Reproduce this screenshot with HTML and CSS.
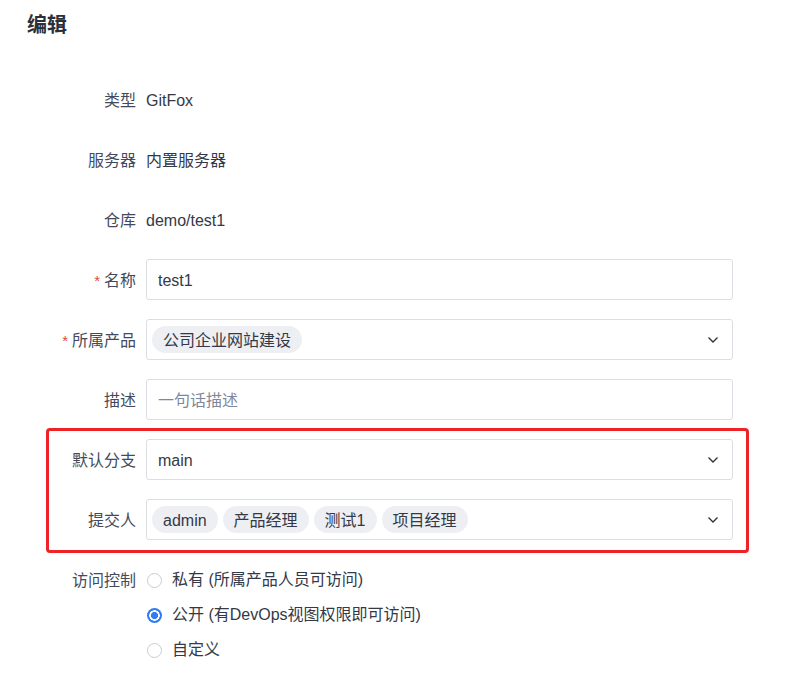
FILE: index.html
```html
<!DOCTYPE html>
<html lang="zh">
<head>
<meta charset="utf-8">
<title>编辑</title>
<link rel="stylesheet" href="styles.css">
</head>
<body>
<div class="page">
  <h1 class="title">编辑</h1>
  <div class="form">
    <div class="row"><div class="label">类型</div><div class="value">GitFox</div></div>
    <div class="row"><div class="label">服务器</div><div class="value">内置服务器</div></div>
    <div class="row"><div class="label">仓库</div><div class="value">demo/test1</div></div>
    <div class="row"><div class="label"><span class="req">*</span>名称</div><div class="control input"><span class="text">test1</span></div></div>
    <div class="row"><div class="label"><span class="req">*</span>所属产品</div>
      <div class="control select"><div class="tags"><span class="tag">公司企业网站建设</span></div>
        <svg class="chev" width="12" height="8" viewBox="0 0 12 8"><path d="M1.5 1.5 L6 6 L10.5 1.5" fill="none" stroke="#2b2f38" stroke-width="1.3"/></svg>
      </div>
    </div>
    <div class="row"><div class="label">描述</div><div class="control input"><span class="text placeholder">一句话描述</span></div></div>
    <div class="group">
      <div class="row"><div class="label">默认分支</div>
        <div class="control select"><span class="text">main</span>
          <svg class="chev" width="12" height="8" viewBox="0 0 12 8"><path d="M1.5 1.5 L6 6 L10.5 1.5" fill="none" stroke="#2b2f38" stroke-width="1.3"/></svg>
        </div>
      </div>
      <div class="row last"><div class="label">提交人</div>
        <div class="control select"><div class="tags"><span class="tag">admin</span><span class="tag">产品经理</span><span class="tag">测试1</span><span class="tag">项目经理</span></div>
          <svg class="chev" width="12" height="8" viewBox="0 0 12 8"><path d="M1.5 1.5 L6 6 L10.5 1.5" fill="none" stroke="#2b2f38" stroke-width="1.3"/></svg>
        </div>
      </div>
      <div class="highlight"></div>
    </div>
    <div class="radio-block">
      <div class="label radio-label">访问控制</div>
      <div class="options">
        <label class="option"><span class="radio"></span>私有 (所属产品人员可访问)</label>
        <label class="option"><span class="radio checked"></span>公开 (有DevOps视图权限即可访问)</label>
        <label class="option"><span class="radio"></span>自定义</label>
      </div>
    </div>
  </div>
</div>
</body>
</html>
```
FILE: styles.css
```css
* { box-sizing: border-box; }
body {
  margin: 0;
  background: #fff;
  font-family: "Liberation Sans", "Noto Sans CJK SC", sans-serif;
  font-size: 16px;
  color: #313744;
}
.page { padding-top: 13px; }
.title {
  margin: 0 0 0 27px;
  font-size: 20px;
  line-height: 24px;
  font-weight: bold;
  color: #2b2f3a;
}
.form {
  margin-top: 42px;
  padding-left: 40px;
  width: 733px;
}
.row {
  display: flex;
  align-items: center;
  height: 41px;
  margin-bottom: 19px;
}
.row.last { margin-bottom: 0; }
.label {
  width: 96px;
  flex: none;
  margin-right: 10px;
  text-align: right;
  color: #434a5d;
  line-height: 20px;
  padding-top: 2px;
}
.req {
  color: #e0473f;
  margin-right: 4px;
  font-size: 15px;
}
.value { color: #333947; line-height: 20px; padding-top: 2px; }
.control {
  flex: 1;
  height: 41px;
  border: 1px solid #dcdee4;
  border-radius: 3px;
  background: #fff;
  display: flex;
  align-items: center;
}
.input { padding-left: 11px; }
.select { padding: 0 13px 0 11px; justify-content: space-between; }
.select .tags { margin-left: -6px; }
.text { color: #333947; line-height: 20px; padding-top: 2px; }
.placeholder { color: #80879a; }
.tags { display: flex; gap: 5px; }
.tag {
  display: inline-flex;
  align-items: center;
  height: 27px;
  padding: 2px 11px 0;
  border-radius: 14px;
  background: #edeff3;
  color: #333947;
  line-height: 20px;
}
.chev { flex: none; }
.group { position: relative; }
.highlight {
  position: absolute;
  top: -11px;
  bottom: -13px;
  left: 6px;
  right: -16px;
  border: 3px solid #ee2328;
  border-radius: 4px;
  pointer-events: none;
}
.radio-block {
  display: flex;
  align-items: flex-start;
  margin-top: 22px;
}
.radio-label { line-height: 35px; padding-top: 1px; }
.options { display: flex; flex-direction: column; }
.option {
  display: flex;
  align-items: center;
  height: 35px;
  padding-top: 1px;
  color: #333947;
  line-height: 20px;
}
.radio {
  width: 15px;
  height: 15px;
  margin-left: 1px;
  margin-right: 10px;
  border-radius: 50%;
  border: 1px solid #c8ccd4;
  background: #fff;
  flex: none;
}
.radio.checked {
  border: none;
  background: radial-gradient(circle, #2f7cf6 0 3.3px, #fff 3.8px 5px, #2f7cf6 5.5px);
}
```
